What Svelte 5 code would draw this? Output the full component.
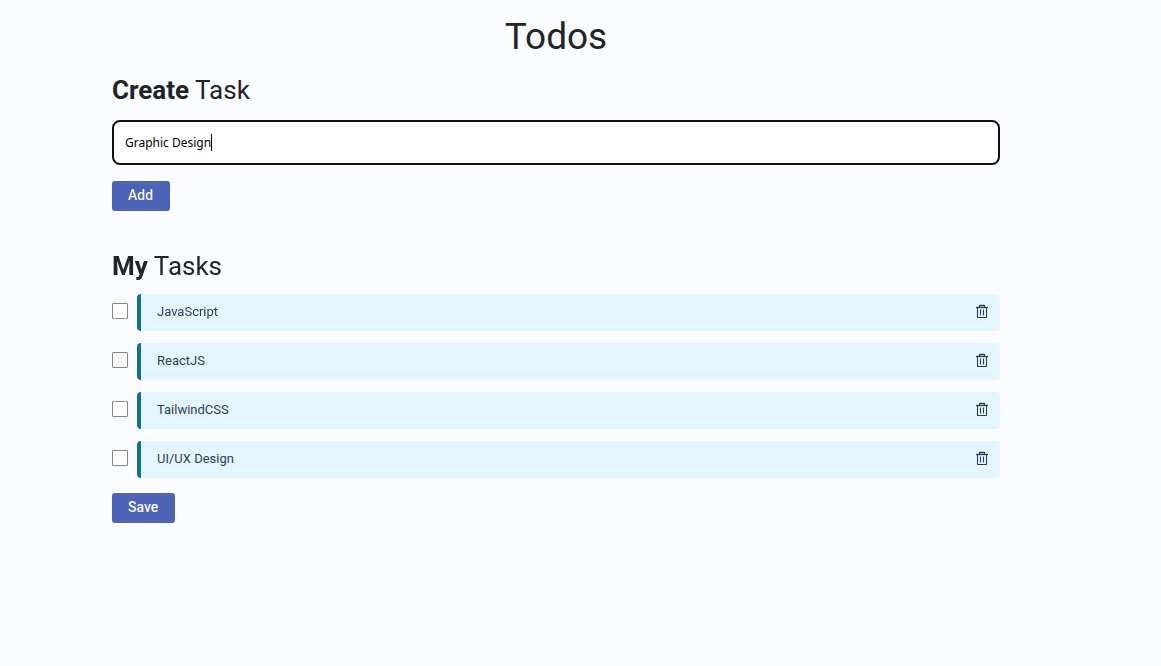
<script>
  import { onMount } from 'svelte';

  let draft = $state('Graphic Design');
  let focused = $state(false);
  let nextId = 5;
  let tasks = $state([
    { id: 1, name: 'JavaScript', done: false },
    { id: 2, name: 'ReactJS', done: false },
    { id: 3, name: 'TailwindCSS', done: false },
    { id: 4, name: 'UI/UX Design', done: false }
  ]);
  let field;

  onMount(() => {
    field.focus();
    field.setSelectionRange(draft.length, draft.length);
    focused = true;
  });

  function add(event) {
    event.preventDefault();
    const name = draft.trim();
    if (!name) return;
    tasks.push({ id: nextId++, name, done: false });
    draft = '';
  }

  function remove(id) {
    tasks = tasks.filter((task) => task.id !== id);
  }
</script>

<main>
  <h1>Todos</h1>

  <form onsubmit={add}>
    <h2><label for="task-name"><b>Create</b> Task</label></h2>
    <label class="field" for="task-name">
      <input
        id="task-name"
        type="text"
        autocomplete="off"
        spellcheck="false"
        bind:this={field}
        bind:value={draft}
        onfocus={() => (focused = true)}
        onblur={() => (focused = false)}
      />
      {#if focused}<span class="caret"></span>{/if}
    </label>
    <button class="button" type="submit">Add</button>
  </form>

  <section>
    <h2><b>My</b> Tasks</h2>
    <ul>
      {#each tasks as task (task.id)}
        <li>
          <input id="task-{task.id}" class="check" type="checkbox" bind:checked={task.done} />
          <div class="task">
            <label for="task-{task.id}">{task.name}</label>
            <button class="remove" type="button" aria-label="Delete {task.name}" onclick={() => remove(task.id)}>
              <svg viewBox="0 0 14 14" width="14" height="14" fill="none" stroke="currentColor" aria-hidden="true">
                <path d="M1 3.5h12" stroke-width="1.3" />
                <path d="M4.5 3.5V2q0-.5.5-.5h4q.5 0 .5.5v1.5" stroke-width="1.3" />
                <path d="M2.5 4v9q0 .5.5.5h8q.5 0 .5-.5V4" stroke-width="1.1" />
                <path d="M5.5 5.5v6M8.5 5.5v6" stroke-width="1.1" />
              </svg>
            </button>
          </div>
        </li>
      {/each}
    </ul>
    <button class="button" type="button">Save</button>
  </section>
</main>

<style>
  :global(body) {
    margin: 0;
    background: #fafcff;
  }

  main {
    padding: 14px 161px 24px 112px;
    color: #212529;
    font-family: Roboto, sans-serif;
  }

  h1,
  h2 {
    margin: 0;
    font-weight: 400;
  }

  h1 {
    margin-bottom: 14px;
    font-size: 37px;
    line-height: 46px;
    text-align: center;
  }

  h2 {
    margin-bottom: 14px;
    font-size: 26px;
    line-height: 32px;
  }

  b {
    font-weight: 700;
  }

  .field {
    display: flex;
    align-items: center;
    box-sizing: border-box;
    height: 45px;
    margin-bottom: 16px;
    padding: 0 11px;
    border: 2px solid #101010;
    border-radius: 8px;
    background: #fff;
    cursor: text;
  }

  .field input {
    field-sizing: content;
    min-width: 0;
    max-width: 100%;
    padding: 0;
    border: 0;
    outline: none;
    background: none;
    caret-color: transparent;
    color: #000;
    font: 12px "Noto Sans", sans-serif;
  }

  .caret {
    flex: none;
    width: 1px;
    height: 17px;
    background: #000;
  }

  .button {
    display: block;
    height: 30px;
    padding: 0 17px 2px 16px;
    border: 0;
    border-radius: 3px;
    background: #4c63b6;
    color: #f5f7fa;
    font: 500 14px Roboto, sans-serif;
    cursor: pointer;
  }

  section {
    margin-top: 39px;
  }

  section h2 {
    margin-bottom: 12px;
  }

  ul {
    display: flex;
    flex-direction: column;
    gap: 12px;
    margin: 0 0 15px;
    padding: 0;
    list-style: none;
  }

  li {
    display: flex;
    align-items: center;
    gap: 9px;
  }

  .check {
    flex: none;
    appearance: none;
    box-sizing: border-box;
    width: 16px;
    height: 16px;
    margin: 0 0 3px;
    border: 1px solid #858585;
    border-radius: 1px;
    background: #fff;
  }

  .check:checked {
    border-color: #127088;
    background: #127088;
    box-shadow: inset 0 0 0 3px #fff;
  }

  .task {
    display: flex;
    flex: 1;
    align-items: center;
    justify-content: space-between;
    box-sizing: border-box;
    height: 37px;
    padding: 0 10px 2px 16px;
    border-left: 4px solid #127088;
    border-radius: 4px;
    background: #e3f5ff;
    color: #323f4b;
    font-size: 13px;
  }

  .remove {
    display: flex;
    padding: 0 1px 1px 0;
    border: 0;
    background: none;
    color: #323f4b;
    cursor: pointer;
  }
</style>
